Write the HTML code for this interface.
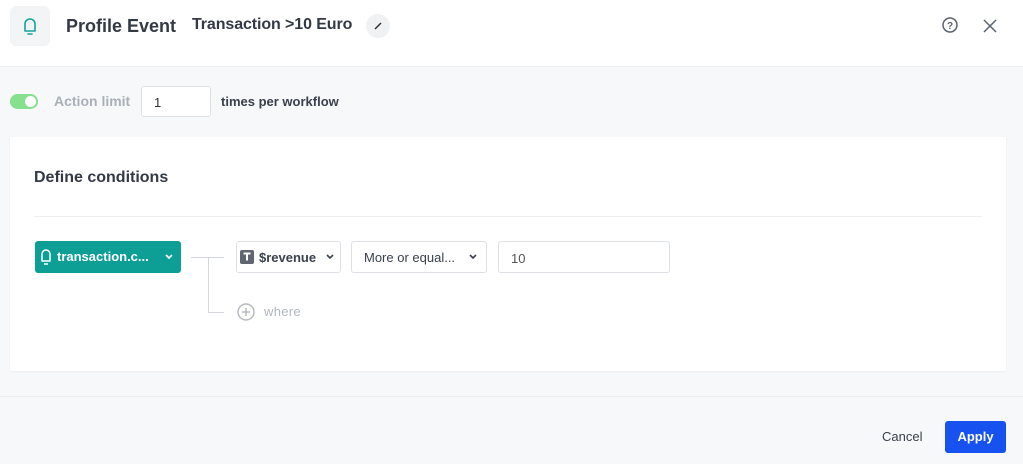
<!DOCTYPE html>
<html><head><style>
*{box-sizing:border-box;margin:0;padding:0}
body{width:1023px;height:464px;background:#f6f8fa;font-family:"Liberation Sans",sans-serif;position:relative;overflow:hidden;color:#2f3542}
.abs{position:absolute}
.hdr{left:0;top:0;width:1023px;height:67px;background:#fff;border-bottom:1px solid #eceef1}
.ic{left:10px;top:6px;width:40px;height:40px;border-radius:6px;background:#f2f4f6}
.box{border:1px solid #dde1e6;border-radius:3px;background:#fff}
</style></head><body>
<div class="abs hdr"></div>
<div class="abs ic"><svg width="40" height="40"><path d="M15 25 V18 a5 5 0 0 1 10 0 V25 Z M18 28 h4" fill="none" stroke="#14a39a" stroke-width="1.6" stroke-linejoin="round" stroke-linecap="round"/></svg></div>
<div class="abs" style="left:66px;top:16px;font-size:18px;font-weight:bold;color:#333a46">Profile Event</div>
<div class="abs" style="left:192px;top:16px;font-size:16px;font-weight:bold;color:#333a46;letter-spacing:-0.1px">Transaction &gt;10 Euro</div>
<div class="abs" style="left:366px;top:14px;width:24px;height:24px;border-radius:12px;background:#eff1f3"><svg width="24" height="24"><path d="M9 15 L15 9" stroke="#333" stroke-width="1.5"/></svg></div>
<svg class="abs" style="left:940px;top:15px" width="20" height="20"><circle cx="10" cy="10" r="7" fill="none" stroke="#5a6270" stroke-width="1.5"/><text x="10" y="14" font-size="10" font-weight="bold" text-anchor="middle" fill="#5a6270" font-family="Liberation Sans">?</text></svg>
<svg class="abs" style="left:980px;top:16px" width="20" height="20"><path d="M4 4 L16 16 M16 4 L4 16" stroke="#5a6270" stroke-width="1.5"/></svg>
<div class="abs" style="left:10px;top:94px;width:28px;height:15px;border-radius:8px;background:#86e08d"><div style="position:absolute;right:2px;top:2px;width:11px;height:11px;border-radius:6px;background:#fff"></div></div>
<div class="abs" style="left:54px;top:93px;font-size:14px;color:#aab0b8;font-weight:bold">Action limit</div>
<div class="abs box" style="left:141px;top:86px;width:70px;height:31px;font-size:13px;padding:8px 12px;color:#333">1</div>
<div class="abs" style="left:221px;top:94px;font-size:13px;font-weight:bold;color:#3a414c">times per workflow</div>
<div class="abs" style="left:10px;top:137px;width:996px;height:234px;background:#fff;box-shadow:0 1px 2px rgba(0,0,0,.05)"></div>
<div class="abs" style="left:34px;top:169px;font-size:16px;font-weight:bold;color:#333a46">Define conditions</div>
<div class="abs" style="left:34px;top:216px;width:948px;height:1px;background:#eceef1"></div>
<div class="abs" style="left:35px;top:241px;width:146px;height:32px;border-radius:3px;background:#0d9e96;color:#fff;font-size:13px;font-weight:bold;padding:8px 0 0 22px">transaction.c...</div>
<svg class="abs" style="left:35px;top:241px" width="146" height="32"><path d="M7 20 V13 a4 4 0 0 1 8 0 V20 Z M9 23 h4" fill="none" stroke="#fff" stroke-width="1.5" stroke-linejoin="round"/><path d="M131 14 l3 3 3-3" fill="none" stroke="#fff" stroke-width="1.7"/></svg>
<div class="abs" style="left:191px;top:257px;width:33px;height:1px;background:#d3d7dc"></div>
<div class="abs" style="left:208px;top:257px;width:1px;height:55px;background:#d3d7dc"></div>
<div class="abs" style="left:208px;top:312px;width:16px;height:1px;background:#d3d7dc"></div>
<div class="abs box" style="left:236px;top:241px;width:105px;height:32px;font-size:13px;font-weight:bold;color:#3a414c;padding:8px 0 0 22px">$revenue</div>
<svg class="abs" style="left:236px;top:241px" width="105" height="32"><rect x="4" y="9" width="14" height="14" rx="2" fill="#5f6672"/><path d="M7.5 12.5 h7 M11 12.5 v7" stroke="#fff" stroke-width="2"/><path d="M91 14 l3 3 3-3" fill="none" stroke="#3a414c" stroke-width="1.6"/></svg>
<div class="abs box" style="left:351px;top:241px;width:136px;height:32px;font-size:13px;color:#3a414c;padding:8px 0 0 12px">More or equal...</div>
<svg class="abs" style="left:351px;top:241px" width="136" height="32"><path d="M119 14 l3 3 3-3" fill="none" stroke="#3a414c" stroke-width="1.6"/></svg>
<div class="abs box" style="left:498px;top:241px;width:172px;height:32px;font-size:13px;color:#555;padding:9px 12px">10</div>
<svg class="abs" style="left:236px;top:302px" width="20" height="20"><circle cx="10" cy="10" r="8" fill="none" stroke="#b6bbc2" stroke-width="1.5"/><path d="M10 6 v8 M6 10 h8" stroke="#b6bbc2" stroke-width="1.5"/></svg>
<div class="abs" style="left:264px;top:304px;font-size:13px;color:#b3b8bf;letter-spacing:0.3px">where</div>
<div class="abs" style="left:0;top:396px;width:1023px;height:1px;background:#eceef1"></div>
<div class="abs" style="left:882px;top:429px;font-size:13px;color:#3a414c">Cancel</div>
<div class="abs" style="left:945px;top:421px;width:61px;height:32px;border-radius:3px;background:#1752f0;color:#fff;font-size:13px;font-weight:bold;text-align:center;line-height:32px">Apply</div>
</body></html>
